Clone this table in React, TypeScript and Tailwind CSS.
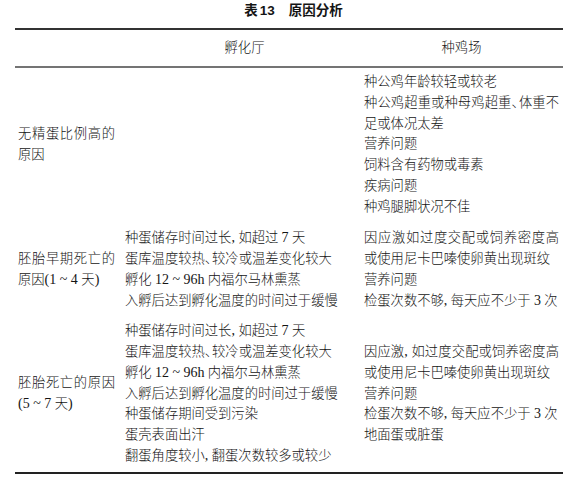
import React from "react";

const L = ({ children, j = false }: { children: React.ReactNode; j?: boolean }) => (
  <div
    className={
      "h-[20.75px] leading-[20.75px] whitespace-nowrap " +
      (j ? "w-full [text-align-last:justify] text-justify" : "")
    }
  >
    {children}
  </div>
);

const Dun = () => <span className="tracking-[-6px] mr-[0px]">、</span>;
const N = ({ children }: { children: React.ReactNode }) => <span className="text-[14px]">{children}</span>;

type Row = { c1: React.ReactNode[]; c2: React.ReactNode[]; c3: React.ReactNode[]; pt: string; pb: string };

const rows: Row[] = [
  {
    pt: "pt-[4px]",
    pb: "pb-[6px]",
    c1: [<L key="a" j>无精蛋比例高的</L>, <L key="b">原因</L>],
    c2: [],
    c3: [
      <L key="1">种公鸡年龄较轻或较老</L>,
      <L key="2" j>种公鸡超重或种母鸡超重<Dun />体重不</L>,
      <L key="3">足或体况太差</L>,
      <L key="4">营养问题</L>,
      <L key="5">饲料含有药物或毒素</L>,
      <L key="6">疾病问题</L>,
      <L key="7">种鸡腿脚状况不佳</L>,
    ],
  },
  {
    pt: "pt-[5px]",
    pb: "pb-[5px]",
    c1: [<L key="a" j>胚胎早期死亡的</L>, <L key="b">原因<N>(1 ~ 4 </N>天<N>)</N></L>],
    c2: [
      <L key="1">种蛋储存时间过长<N>, </N>如超过 <N>7</N> 天</L>,
      <L key="2">蛋库温度较热<Dun />较冷或温差变化较大</L>,
      <L key="3">孵化 <N>12 ~ 96h</N> 内福尔马林熏蒸</L>,
      <L key="4">入孵后达到孵化温度的时间过于缓慢</L>,
    ],
    c3: [
      <L key="1" j>因应激如过度交配或饲养密度高</L>,
      <L key="2">或使用尼卡巴嗪使卵黄出现斑纹</L>,
      <L key="3">营养问题</L>,
      <L key="4">检蛋次数不够<N>, </N>每天应不少于 <N>3</N> 次</L>,
    ],
  },
  {
    pt: "pt-[5px]",
    pb: "pb-[5px]",
    c1: [<L key="a" j>胚胎死亡的原因</L>, <L key="b"><N>(5 ~ 7 </N>天<N>)</N></L>],
    c2: [
      <L key="1">种蛋储存时间过长<N>, </N>如超过 <N>7</N> 天</L>,
      <L key="2">蛋库温度较热<Dun />较冷或温差变化较大</L>,
      <L key="3">孵化 <N>12 ~ 96h</N> 内福尔马林熏蒸</L>,
      <L key="4">入孵后达到孵化温度的时间过于缓慢</L>,
      <L key="5">种蛋储存期间受到污染</L>,
      <L key="6">蛋壳表面出汗</L>,
      <L key="7">翻蛋角度较小<N>, </N>翻蛋次数较多或较少</L>,
    ],
    c3: [
      <L key="1" j>因应激<N>, </N>如过度交配或饲养密度高</L>,
      <L key="2">或使用尼卡巴嗪使卵黄出现斑纹</L>,
      <L key="3">营养问题</L>,
      <L key="4">检蛋次数不够<N>, </N>每天应不少于 <N>3</N> 次</L>,
      <L key="5">地面蛋或脏蛋</L>,
    ],
  },
];

export default function App() {
  return (
    <div className="w-[578px] h-[477px] bg-white text-[#141414] overflow-hidden">
      <div className="h-[22px] flex items-center justify-center pl-[9px] font-['Liberation_Sans','Noto_Sans_CJK_SC',sans-serif] font-bold text-[13.5px] leading-[22px]">
        <span>表</span>
        <span className="ml-[2px]">13</span>
        <span className="ml-[14px]">原因分析</span>
      </div>
      <div className="mx-[15px] mt-[6px] font-['Liberation_Serif','Noto_Sans_CJK_SC',serif] font-light text-[13.3px]">
        <div className="h-[2px] bg-[#333333]" />
        <div className="h-[36px] grid grid-cols-[110px_239px_199px] items-center">
          <div />
          <div className="text-center">孵化厅</div>
          <div className="text-center pr-[4px]">种鸡场</div>
        </div>
        <div className="h-[2px] bg-[#747474]" />
        {rows.map((r, i) => (
          <div key={i} className={"grid grid-cols-[110px_239px_199px] items-center " + r.pt + " " + r.pb}>
            <div className="pl-[3px]">
              <div className="w-[97px]">{r.c1}</div>
            </div>
            <div>{r.c2}</div>
            <div className="w-[195px]">{r.c3}</div>
          </div>
        ))}
        <div className="h-[2px] bg-[#222222]" />
      </div>
    </div>
  );
}
